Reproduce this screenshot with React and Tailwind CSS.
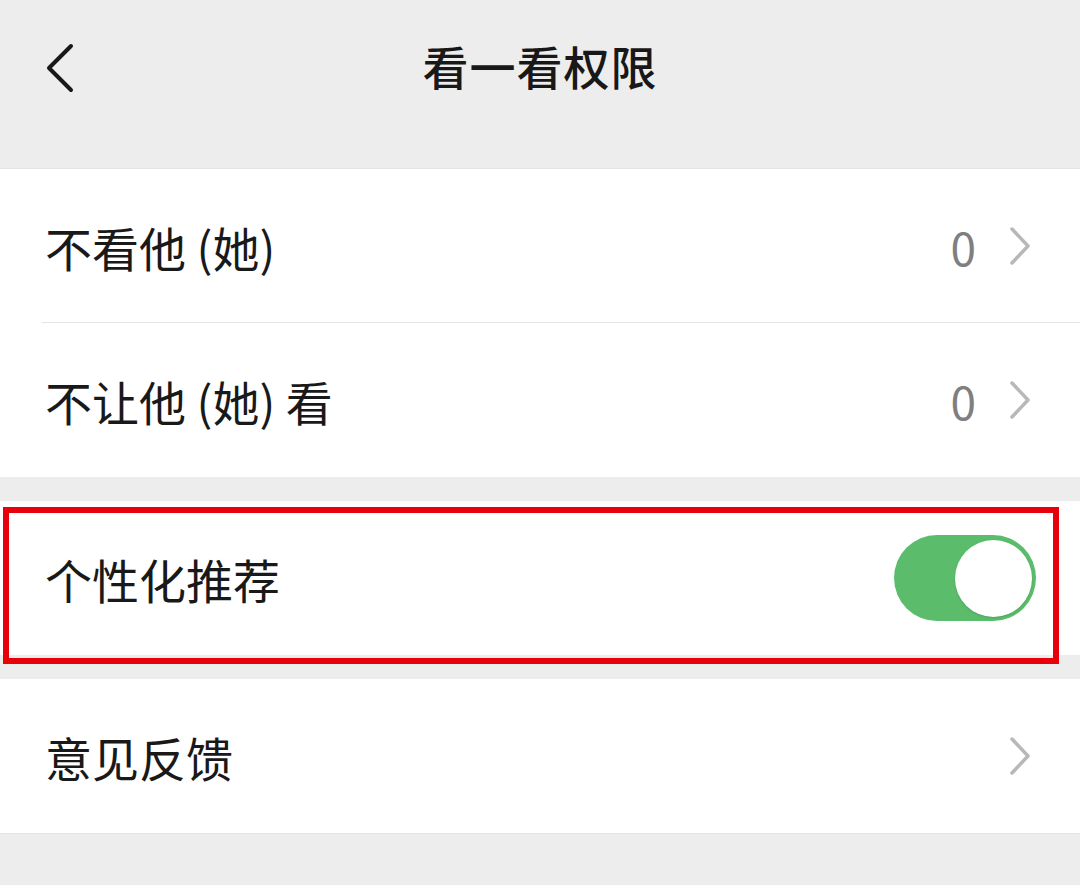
import React, { useState } from "react";

const font = { fontFamily: '"Noto Sans CJK SC", "Noto Sans", sans-serif' };

const Chevron = () => (
  <svg width="24" height="40" viewBox="0 0 24 40" className="ml-8">
    <path d="M4 3 L20 20 L4 37" fill="none" stroke="#b8b8b8" strokeWidth="3.5" strokeLinecap="round" strokeLinejoin="round" />
  </svg>
);

const Row = ({ label, value, children, divider }) => (
  <div className="relative h-[154px] bg-white flex items-center pl-[45px] pr-[48px]">
    <span className="text-[47px] text-[#191919] leading-none">{label}</span>
    <div className="ml-auto flex items-center">
      {value !== undefined && <span className="text-[46px] text-[#7f7f7f] leading-none">{value}</span>}
      {children}
    </div>
    {divider && <div className="absolute bottom-0 left-[42px] right-0 h-px bg-[#e5e5e5]" />}
  </div>
);

const App = () => {
  const [on, setOn] = useState(true);

  return (
    <div className="w-[1080px] h-[885px] bg-[#ededed] overflow-hidden relative" style={font}>
      {/* header */}
      <div className="h-[169px] relative flex items-start justify-center border-b border-[#e3e3e3]">
        <svg width="40" height="52" viewBox="0 0 40 52" className="absolute left-[40px] top-[42px]">
          <path d="M31 4 L9 26 L31 48" fill="none" stroke="#181818" strokeWidth="4" strokeLinecap="round" strokeLinejoin="round" />
        </svg>
        <h1 className="mt-[35px] text-[46px] font-medium text-[#181818] leading-[60px] tracking-[1px]">看一看权限</h1>
      </div>

      <Row label="不看他 (她)" value="0" divider>
        <Chevron />
      </Row>
      <Row label="不让他 (她) 看" value="0">
        <Chevron />
      </Row>

      <div className="h-[24px]" />

      <Row label="个性化推荐">
        <button
          onClick={() => setOn(!on)}
          className={`w-[142px] h-[86px] rounded-full flex items-center p-[4px] -mr-[4px] ${on ? "bg-[#5bbd6b] justify-end" : "bg-[#e5e5e5] justify-start"}`}
        >
          <span className="w-[77px] h-[77px] rounded-full bg-white shadow-sm" />
        </button>
      </Row>

      <div className="h-[24px]" />

      <div className="border-b border-[#e3e3e3]">
        <Row label="意见反馈">
          <Chevron />
        </Row>
      </div>

      {/* red highlight */}
      <div className="absolute left-[3px] top-[507px] w-[1056px] h-[157px] border-[6px] border-[#e8000b] pointer-events-none" />
    </div>
  );
};

export default App;
